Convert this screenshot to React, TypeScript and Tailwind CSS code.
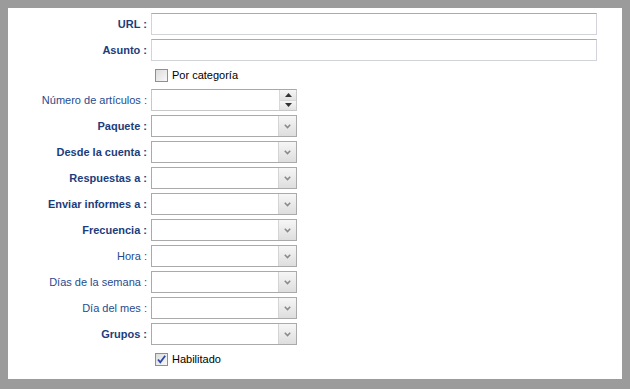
import React from 'react';

type Row = { label: string; bold: boolean; kind: 'wide' | 'number' | 'select' | 'check'; checked?: boolean };

const rows: Row[] = [
  { label: 'URL', bold: true, kind: 'wide' },
  { label: 'Asunto', bold: true, kind: 'wide' },
  { label: 'Por categoría', bold: false, kind: 'check', checked: false },
  { label: 'Número de artículos', bold: false, kind: 'number' },
  { label: 'Paquete', bold: true, kind: 'select' },
  { label: 'Desde la cuenta', bold: true, kind: 'select' },
  { label: 'Respuestas a', bold: true, kind: 'select' },
  { label: 'Enviar informes a', bold: true, kind: 'select' },
  { label: 'Frecuencia', bold: true, kind: 'select' },
  { label: 'Hora', bold: false, kind: 'select' },
  { label: 'Días de la semana', bold: false, kind: 'select' },
  { label: 'Día del mes', bold: false, kind: 'select' },
  { label: 'Grupos', bold: true, kind: 'select' },
  { label: 'Habilitado', bold: false, kind: 'check', checked: true },
];

const Checkbox = ({ checked }: { checked?: boolean }) => (
  <span className="relative inline-flex h-[13px] w-[13px] items-center justify-center border border-[#8e8f8f] bg-gradient-to-br from-[#dcdcdc] to-[#f8f8f8]">
    {checked && (
      <svg width="11" height="11" viewBox="0 0 11 11" className="absolute">
        <path d="M2 5.5 L4.3 8.3 L9.2 1.8" fill="none" stroke="#2a48a8" strokeWidth="1.8" />
      </svg>
    )}
  </span>
);

const Field = ({ kind }: { kind: Row['kind'] }) => {
  if (kind === 'wide') {
    return <div className="h-[22px] w-[446px] border border-[#d3d3dc] border-t-[#ababab] bg-white" />;
  }
  if (kind === 'number') {
    return (
      <div className="flex h-[22px] w-[146px] border border-[#c8c8c8] border-t-[#a8a8a8] bg-white">
        <div className="flex-1" />
        <div className="flex w-[17px] flex-col border-l border-[#d8d8d8]">
          <div className="flex flex-1 items-center justify-center border-b border-[#d8d8d8] bg-gradient-to-b from-[#f6f6f6] to-[#e2e2e2]">
            <svg width="7" height="4" viewBox="0 0 7 4"><path d="M0 4 L3.5 0 L7 4 Z" fill="#333" /></svg>
          </div>
          <div className="flex flex-1 items-center justify-center bg-gradient-to-b from-[#f6f6f6] to-[#e2e2e2]">
            <svg width="7" height="4" viewBox="0 0 7 4"><path d="M0 0 L3.5 4 L7 0 Z" fill="#333" /></svg>
          </div>
        </div>
      </div>
    );
  }
  return (
    <div className="flex h-[22px] w-[146px] border border-[#aaaaaa] bg-white">
      <div className="flex-1" />
      <div className="flex w-[18px] items-center justify-center border-l border-[#d4d4d4] bg-gradient-to-b from-[#f6f6f6] to-[#dedede]">
        <svg width="7" height="5" viewBox="0 0 7 5">
          <path d="M0.8 0.8 L3.5 3.5 L6.2 0.8" fill="none" stroke="#8a8a8a" strokeWidth="1.6" />
        </svg>
      </div>
    </div>
  );
};

export default function App() {
  return (
    <div className="h-[389px] w-[630px] bg-[#9b9b9b] pt-2 pl-2 pr-2 pb-[10px]" style={{ fontFamily: '"Liberation Sans", Arial, sans-serif' }}>
      <div className="flex h-full flex-col gap-1 bg-white pt-[5px]">
        {rows.map((r) =>
          r.kind === 'check' ? (
            <div key={r.label} className="flex h-[20px] items-center gap-1 pl-[147px]">
              <Checkbox checked={r.checked} />
              <span className="text-[11px] text-black">{r.label}</span>
            </div>
          ) : (
            <div key={r.label} className="flex h-[22px] items-center gap-1">
              <span
                className={`w-[139px] text-right text-[11px] ${r.bold ? 'font-bold text-[#1b3d7c]' : 'text-[#1f4b8e]'}`}
              >
                {r.label} :
              </span>
              <Field kind={r.kind} />
            </div>
          )
        )}
      </div>
    </div>
  );
}
